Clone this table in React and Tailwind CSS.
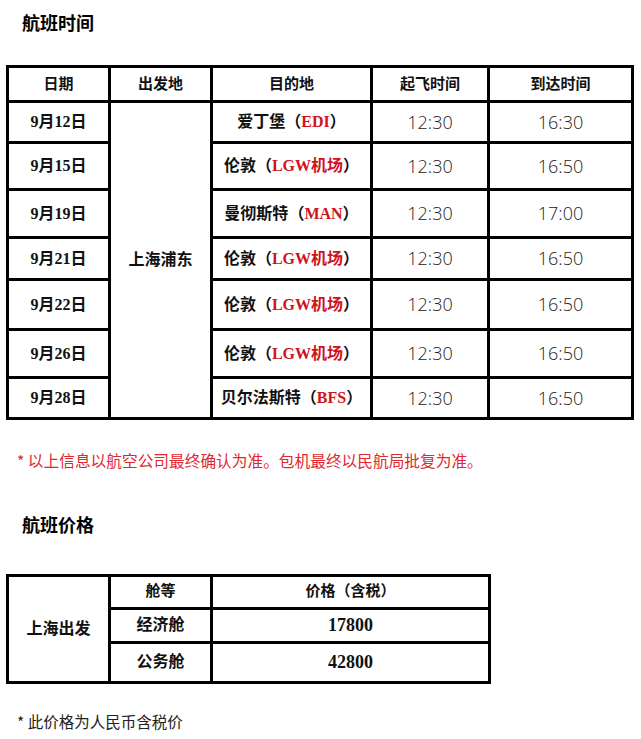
import React from 'react';

const serif = { fontFamily: '"Liberation Serif", "Noto Sans CJK SC", serif' };

const flights = [
  { date: '9月12日', city: '爱丁堡', code: 'EDI', dep: '12:30', arr: '16:30', h: 'h-[41px]' },
  { date: '9月15日', city: '伦敦', code: 'LGW机场', dep: '12:30', arr: '16:50', h: 'h-[47px]' },
  { date: '9月19日', city: '曼彻斯特', code: 'MAN', dep: '12:30', arr: '17:00', h: 'h-[48px]' },
  { date: '9月21日', city: '伦敦', code: 'LGW机场', dep: '12:30', arr: '16:50', h: 'h-[42px]' },
  { date: '9月22日', city: '伦敦', code: 'LGW机场', dep: '12:30', arr: '16:50', h: 'h-[50px]' },
  { date: '9月26日', city: '伦敦', code: 'LGW机场', dep: '12:30', arr: '16:50', h: 'h-[48px]' },
  { date: '9月28日', city: '贝尔法斯特', code: 'BFS', dep: '12:30', arr: '16:50', h: 'h-[41px]' },
];

const cell = 'border-[3px] border-black text-center align-middle p-0';

const Title = ({ children }) => (
  <h2 className="pl-[22px] text-[18px] font-bold text-black leading-none font-['Noto_Sans_CJK_SC',sans-serif]">
    {children}
  </h2>
);

const App = () => {
  return (
    <div className="w-[641px] h-[739px] bg-white overflow-hidden text-[#111]" style={serif}>
      <div className="pt-[13px]">
        <Title>航班时间</Title>
      </div>

      <div className="pl-[6px] pt-[34px]">
        <table className="table-fixed border-collapse w-[625px]">
          <colgroup>
            <col className="w-[102px]" />
            <col className="w-[102px]" />
            <col className="w-[160px]" />
            <col className="w-[117px]" />
            <col className="w-[144px]" />
          </colgroup>
          <thead>
            <tr className="h-[35px] text-[15px] font-bold">
              <th className={cell}>日期</th>
              <th className={cell}>出发地</th>
              <th className={cell}>目的地</th>
              <th className={cell}>起飞时间</th>
              <th className={cell}>到达时间</th>
            </tr>
          </thead>
          <tbody>
            {flights.map((f, i) => (
              <tr key={f.date} className={f.h}>
                <td className={`${cell} text-[16px] font-bold`}>{f.date}</td>
                {i === 0 && (
                  <td rowSpan={flights.length} className={`${cell} text-[16px] font-semibold`}>
                    上海浦东
                  </td>
                )}
                <td className={`${cell} text-[16px] font-semibold`}>
                  {f.city}（<span className="text-[#d0121b] font-bold">{f.code}</span>）
                </td>
                <td className={`${cell} text-[18px] text-[#222] font-['Open_Sans',sans-serif] font-light`}>{f.dep}</td>
                <td className={`${cell} text-[18px] text-[#222] font-['Open_Sans',sans-serif] font-light`}>{f.arr}</td>
              </tr>
            ))}
          </tbody>
        </table>
      </div>

      <p className="pl-[17px] pt-[33px] text-[15.7px] leading-none text-[#e0282e] font-['Noto_Sans_CJK_SC',sans-serif]">
        * 以上信息以航空公司最终确认为准。包机最终以民航局批复为准。
      </p>

      <div className="pt-[46px]">
        <Title>航班价格</Title>
      </div>

      <div className="pl-[6px] pt-[41px]">
        <table className="table-fixed border-collapse w-[482px]">
          <colgroup>
            <col className="w-[102px]" />
            <col className="w-[102px]" />
            <col className="w-[278px]" />
          </colgroup>
          <tbody>
            <tr className="h-[33px] text-[15px] font-bold">
              <td rowSpan={3} className={`${cell} text-[16px] font-semibold`}>上海出发</td>
              <td className={cell}>舱等</td>
              <td className={cell}>价格（含税）</td>
            </tr>
            <tr className="h-[34px] text-[16px] font-bold">
              <td className={cell}>经济舱</td>
              <td className={`${cell} text-[18px] font-semibold`}>17800</td>
            </tr>
            <tr className="h-[40px] text-[16px] font-bold">
              <td className={cell}>公务舱</td>
              <td className={`${cell} text-[18px] font-semibold`}>42800</td>
            </tr>
          </tbody>
        </table>
      </div>

      <p className="pl-[17px] pt-[30px] text-[15.5px] leading-none text-[#222] font-['Noto_Sans_CJK_SC',sans-serif]">
        * 此价格为人民币含税价
      </p>
    </div>
  );
};

export default App;
